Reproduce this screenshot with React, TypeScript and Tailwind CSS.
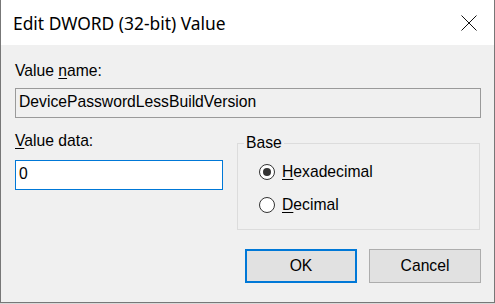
import React from "react";

const body = { fontFamily: '"Liberation Sans", Arial, sans-serif' };
const title = { fontFamily: '"Segoe UI", "Noto Sans", "Open Sans", sans-serif' };

function CloseIcon() {
  return (
    <svg width="16" height="16" viewBox="0 0 16 16" className="block">
      <path d="M0.5 0.5 L15.5 15.5 M15.5 0.5 L0.5 15.5" stroke="#111" strokeWidth="1" fill="none" />
    </svg>
  );
}

function Radio({ checked }: { checked?: boolean }) {
  return (
    <span className="flex h-[16px] w-[16px] items-center justify-center rounded-full border border-[#333] bg-white">
      {checked && <span className="h-[8px] w-[8px] rounded-full bg-[#333]" />}
    </span>
  );
}

export default function App() {
  return (
    <div className="h-[304px] w-[495px] bg-[#d8d8d8]" style={body}>
      <div className="flex h-[303px] w-[495px] flex-col border-x border-b border-[#777]">
        <div className="flex h-[45px] items-center justify-between bg-white pl-[12px] pr-[17px]">
          <span className="text-[17.4px] leading-[22px] text-black" style={title}>
            Edit DWORD (32-bit) Value
          </span>
          <CloseIcon />
        </div>

        <div className="flex flex-1 flex-col bg-[#f0f0f0] pl-[14px] pr-[13px] text-[15.7px] leading-[18px] text-black">
          <div className="mt-[17px]">
            Value <span className="underline underline-offset-2">n</span>ame:
          </div>
          <div className="mt-[8px] flex h-[30px] items-center border border-[#9a9a9a] bg-[#f0f0f0] pb-[2px] pl-[3px]">
            DevicePasswordLessBuildVersion
          </div>

          <div className="mt-[14px] flex gap-[14px]">
            <div className="flex w-[208px] flex-col">
              <div>
                <span className="underline underline-offset-2">V</span>alue data:
              </div>
              <div className="mt-[10px] flex h-[30px] items-center border border-[#0078d7] bg-white pb-[2px] pl-[3px]">
                0
              </div>
            </div>

            <fieldset className="mt-[2px] h-[96px] w-[243px] border border-[#dcdcdc]">
              <legend className="ml-[6px] px-[2px]">Base</legend>
              <div className="mt-[11px] flex h-[18px] items-center gap-[7px] pl-[21px]">
                <Radio checked />
                <span>
                  <span className="underline underline-offset-2">H</span>exadecimal
                </span>
              </div>
              <div className="mt-[15px] flex h-[18px] items-center gap-[7px] pl-[21px]">
                <Radio />
                <span>
                  <span className="underline underline-offset-2">D</span>ecimal
                </span>
              </div>
            </fieldset>
          </div>

          <div className="mt-[19px] flex justify-end gap-[12px]">
            <button className="flex h-[34px] w-[112px] items-center justify-center border-2 border-[#0078d7] bg-[#e1e1e1]">
              OK
            </button>
            <button className="flex h-[34px] w-[112px] items-center justify-center border border-[#adadad] bg-[#e1e1e1]">
              Cancel
            </button>
          </div>
        </div>
      </div>
    </div>
  );
}
